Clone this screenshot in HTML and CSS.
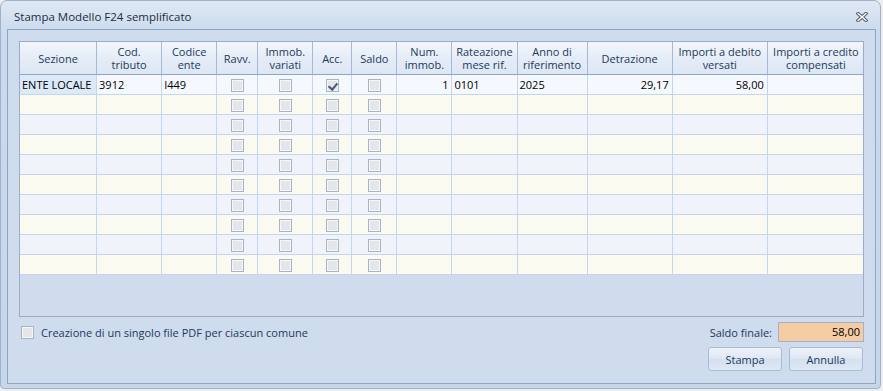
FILE: index.html
```html
<!DOCTYPE html>
<html lang="it">
<head>
<meta charset="utf-8">
<title>Stampa Modello F24 semplificato</title>
<link rel="stylesheet" href="styles.css">
</head>
<body>
<div class="window">
  <div class="titlebar">
    <span class="title">Stampa Modello F24 semplificato</span>
    <span class="close" aria-label="Chiudi">
      <svg width="12" height="10" viewBox="0 0 12 10">
        <path d="M2 1.5 L10 8.5 M10 1.5 L2 8.5" stroke="#5a5f66" stroke-width="3.4" stroke-linecap="square" fill="none"/>
        <path d="M2 1.5 L10 8.5 M10 1.5 L2 8.5" stroke="#ffffff" stroke-width="1.3" stroke-linecap="square" fill="none"/>
      </svg>
    </span>
  </div>
  <div class="client">
    <div class="grid">
      <table>
        <colgroup>
          <col class="w77"><col class="w65"><col class="w55"><col class="w41"><col class="w55"><col class="w39"><col class="w45"><col class="w55"><col class="w65"><col class="w70"><col class="w85"><col class="w95"><col class="w96">
        </colgroup>
        <thead>
          <tr>
            <th>Sezione</th>
            <th>Cod.<br>tributo</th>
            <th>Codice<br>ente</th>
            <th>Ravv.</th>
            <th>Immob.<br>variati</th>
            <th>Acc.</th>
            <th>Saldo</th>
            <th>Num.<br>immob.</th>
            <th>Rateazione<br>mese rif.</th>
            <th>Anno di<br>riferimento</th>
            <th>Detrazione</th>
            <th>Importi a debito<br>versati</th>
            <th class="last">Importi a credito<br>compensati</th>
          </tr>
        </thead>
        <tbody>
          <tr class="odd first">
            <td class="focus">ENTE LOCALE</td><td>3912</td><td>I449</td>
            <td class="cb"><span class="chk"></span></td><td class="cb"><span class="chk"></span></td><td class="cb"><span class="chk on"></span></td><td class="cb"><span class="chk"></span></td>
            <td class="num">1</td><td>0101</td><td>2025</td><td class="num">29,17</td><td class="num">58,00</td><td class="last"></td>
          </tr>
          <tr class="even"><td></td><td></td><td></td><td class="cb"><span class="chk"></span></td><td class="cb"><span class="chk"></span></td><td class="cb"><span class="chk"></span></td><td class="cb"><span class="chk"></span></td><td></td><td></td><td></td><td></td><td></td><td class="last"></td></tr>
          <tr class="odd"><td></td><td></td><td></td><td class="cb"><span class="chk"></span></td><td class="cb"><span class="chk"></span></td><td class="cb"><span class="chk"></span></td><td class="cb"><span class="chk"></span></td><td></td><td></td><td></td><td></td><td></td><td class="last"></td></tr>
          <tr class="even"><td></td><td></td><td></td><td class="cb"><span class="chk"></span></td><td class="cb"><span class="chk"></span></td><td class="cb"><span class="chk"></span></td><td class="cb"><span class="chk"></span></td><td></td><td></td><td></td><td></td><td></td><td class="last"></td></tr>
          <tr class="odd"><td></td><td></td><td></td><td class="cb"><span class="chk"></span></td><td class="cb"><span class="chk"></span></td><td class="cb"><span class="chk"></span></td><td class="cb"><span class="chk"></span></td><td></td><td></td><td></td><td></td><td></td><td class="last"></td></tr>
          <tr class="even"><td></td><td></td><td></td><td class="cb"><span class="chk"></span></td><td class="cb"><span class="chk"></span></td><td class="cb"><span class="chk"></span></td><td class="cb"><span class="chk"></span></td><td></td><td></td><td></td><td></td><td></td><td class="last"></td></tr>
          <tr class="odd"><td></td><td></td><td></td><td class="cb"><span class="chk"></span></td><td class="cb"><span class="chk"></span></td><td class="cb"><span class="chk"></span></td><td class="cb"><span class="chk"></span></td><td></td><td></td><td></td><td></td><td></td><td class="last"></td></tr>
          <tr class="even"><td></td><td></td><td></td><td class="cb"><span class="chk"></span></td><td class="cb"><span class="chk"></span></td><td class="cb"><span class="chk"></span></td><td class="cb"><span class="chk"></span></td><td></td><td></td><td></td><td></td><td></td><td class="last"></td></tr>
          <tr class="odd"><td></td><td></td><td></td><td class="cb"><span class="chk"></span></td><td class="cb"><span class="chk"></span></td><td class="cb"><span class="chk"></span></td><td class="cb"><span class="chk"></span></td><td></td><td></td><td></td><td></td><td></td><td class="last"></td></tr>
          <tr class="even"><td></td><td></td><td></td><td class="cb"><span class="chk"></span></td><td class="cb"><span class="chk"></span></td><td class="cb"><span class="chk"></span></td><td class="cb"><span class="chk"></span></td><td></td><td></td><td></td><td></td><td></td><td class="last"></td></tr>
        </tbody>
      </table>
    </div>
    <div class="footer">
      <label class="option"><span class="chk"></span><span>Creazione di un singolo file PDF per ciascun comune</span></label>
      <div class="saldo">
        <span class="saldo-label">Saldo finale:</span>
        <span class="saldo-value">58,00</span>
      </div>
    </div>
    <div class="buttons">
      <button class="btn">Stampa</button>
      <button class="btn">Annulla</button>
    </div>
  </div>
</div>
</body>
</html>
```
FILE: styles.css
```css
* { box-sizing: border-box; }
html, body { margin: 0; padding: 0; }
body {
  width: 883px;
  height: 391px;
  background: #eceef1;
  font-family: "Open Sans", "Noto Sans", sans-serif;
  font-size: 11px;
  color: #1e395b;
  overflow: hidden;
}
.window {
  width: 881px;
  height: 389px;
  border: 1px solid #a3b1c4;
  border-radius: 7px 7px 4px 4px;
  background: linear-gradient(#dfe9f5 0px, #cbdaee 30px, #c6d6eb 100%);
  display: flex;
  flex-direction: column;
}
.titlebar {
  height: 28px;
  flex: none;
  display: flex;
  align-items: center;
  justify-content: space-between;
  padding: 2px 12px 0 13px;
}
.title { font-size: 11.5px; color: #1e2c3d; }
.close { display: flex; width: 12px; height: 10px; margin-top: 2px; }
.client {
  flex: 1;
  margin: 0 4px 4px 6px;
  border: 1px solid #8ea4c3;
  background: #cfdcee;
  padding: 11px 11px 11px 11px;
  display: flex;
  flex-direction: column;
}
.grid {
  height: 276px;
  border: 1px solid #9aacc7;
  background: #d0dcee;
  flex: none;
  overflow: hidden;
}
table {
  border-collapse: separate;
  border-spacing: 0;
  table-layout: fixed;
  width: 844px;
}
.w77 { width: 77px; } .w65 { width: 65px; } .w55 { width: 55px; } .w41 { width: 41px; }
.w39 { width: 39px; } .w45 { width: 45px; } .w70 { width: 70px; } .w85 { width: 85px; }
.w95 { width: 95px; } .w96 { width: 96px; }
th {
  height: 33px;
  padding: 0 1px;
  font-weight: normal;
  line-height: 13px;
  text-align: center;
  color: #1e395b;
  background: linear-gradient(#f2f6fc, #e4ecf7 55%, #dde6f3);
  border-right: 1px solid #a5b8d4;
  border-bottom: 1px solid #8fa6c6;
  white-space: nowrap;
  overflow: hidden;
}
th.last, td.last { border-right: none; }
td {
  height: 20px;
  padding: 0 2px 0 2px;
  border-right: 1px solid #c3d6ef;
  border-bottom: 1px solid #c3d6ef;
  color: #000;
  white-space: nowrap;
  overflow: hidden;
  line-height: 19px;
}
tr.odd td { background: #f0f4fa; }
tr.even td { background: #fbfaf1; }
tr.first td { background: #f5f8fc; }
tr.first td.focus { background: #dce9f9; }
td.num { text-align: right; padding-right: 3px; }
td.cb { text-align: center; padding: 0; }
td.cb .chk { vertical-align: middle; margin-top: -2px; }
.chk {
  display: inline-block;
  width: 13px;
  height: 13px;
  border: 1px solid #a8b4c6;
  background: #e4e6ea;
  box-shadow: inset 0 0 0 1px #f4f6f9;
  position: relative;
}
.chk.on::after {
  content: "";
  position: absolute;
  left: 3px;
  top: 1px;
  width: 4px;
  height: 7px;
  border-right: 2px solid #4a5870;
  border-bottom: 2px solid #4a5870;
  transform: rotate(40deg);
}
.footer {
  margin-top: 5px;
  height: 20px;
  display: flex;
  align-items: center;
  justify-content: space-between;
  flex: none;
}
.option {
  display: flex;
  align-items: center;
  gap: 7px;
  padding-left: 2px;
  color: #1e395b;
}
.saldo { display: flex; align-items: center; gap: 6px; }
.saldo-value {
  width: 86px;
  height: 20px;
  border: 1px solid #a2b2c9;
  background: #f5cca3;
  color: #000;
  text-align: right;
  padding-right: 3px;
  line-height: 18px;
}
.buttons {
  margin-top: 5px;
  display: flex;
  justify-content: flex-end;
  gap: 7px;
  padding-right: 1px;
}
.btn {
  width: 74px;
  height: 24px;
  font: inherit;
  color: #1e395b;
  border: 1px solid #a9bbd6;
  border-radius: 3px;
  background: linear-gradient(#eef3fa, #dde7f4 50%, #d4e0f0 51%, #dee8f5);
  padding: 0;
}
```
